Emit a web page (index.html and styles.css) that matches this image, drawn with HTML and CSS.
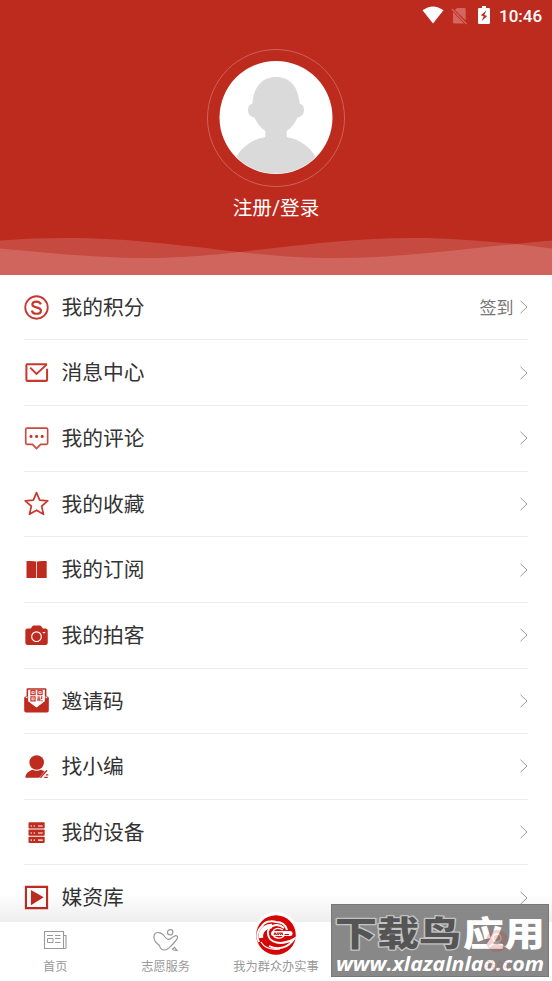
FILE: index.html
```html
<!DOCTYPE html>
<html lang="zh-CN">
<head>
<meta charset="utf-8">
<title>我的</title>
<link rel="stylesheet" href="styles.css">
</head>
<body>
<div class="app">
  <header class="hero">
    <div class="status">
      <svg class="wifi" width="22" height="18" viewBox="0 0 22 18"><path d="M.5 4.3Q11-3.5 21.5 4.3L11 17.5Z" fill="#fff"/></svg>
      <svg class="sim" width="17" height="18" viewBox="0 0 17 18"><path d="M6 1h7.500q1.200 0 1.200 1.200V13.500L4 3Z M2 5 13 16.500H3.200Q2 16.500 2 15.300Z" fill="#d4665e"/><path d="m1 2 14.500 15" stroke="#d4665e" stroke-width="1.400"/></svg>
      <svg class="battery" width="12" height="18" viewBox="0 0 12 18"><path d="M4 0h4v2h2.800q1.200 0 1.200 1.200v13.600q0 1.200-1.200 1.200H1.200Q0 18 0 16.800V3.200Q0 2 1.200 2H4Z" fill="#fff"/><path d="M8.500 4.500 2.800 9.200l2.900 1-2 4.800 5.600-5-3-1Z" fill="#bd2a1e"/></svg>
      <span class="time">10:46</span>
    </div>
    <div class="avatar">
      <svg width="114" height="114" viewBox="0 0 114 114">
        <defs><clipPath id="face"><circle cx="57" cy="56.500" r="56"/></clipPath></defs>
        <circle cx="57" cy="56.500" r="56.500" fill="#fff"/>
        <path clip-path="url(#face)" d="M57 16c-14 0-22.500 10-23.600 26.500-3.500 1-4.700 4-4.400 7 .4 4.500 3 6.500 6.500 7 2.700 6 6.300 10.500 10.800 13.500v6C33 78.500 22 86 16 98.500v15.500h82V98.500C92 86 81 78.500 67.700 76v-6c4.500-3 8.100-7.500 10.800-13.500 3.500-.5 6.100-2.500 6.500-7 .3-3-.9-6-4.400-7C79.500 26 71 16 57 16Z" fill="#dadada"/>
      </svg>
    </div>
    <a class="login">注册/登录</a>
    <svg class="waves" width="552" height="38" viewBox="0 0 552 38">
      <g fill="#fff" fill-opacity=".152">
        <path d="M0 3.500C22 1.800 44 1 67 1c61 0 110 7 173 14 40 4.500 60 6 95 6 65 0 120-8 181-14 12-1.500 24-2.500 36-3.500V38H0Z"/>
        <path d="M0 11.500C50 16 95 21 145 21c35 0 62-2.500 95-6 60-7 112-14 175-14 35 0 68 3 101 6 12 1.500 24 3 36 4.500V38H0Z"/>
      </g>
    </svg>
  </header>

  <main class="menu">
    <a class="row">
      <svg class="icon" viewBox="0 0 26 26"><circle cx="13" cy="13" r="11.700" fill="none" stroke="#c9382d" stroke-width="1.900"/><path d="M17.500 9.700C16.800 7.600 15.200 6.800 13 6.800c-2.500 0-4.300 1.100-4.300 3 0 4.200 8.900 2 8.900 6.500 0 1.900-1.900 3.200-4.500 3.200-2.700 0-4.500-1.200-4.900-3.400" fill="none" stroke="#c9382d" stroke-width="2.300"/></svg>
      <span class="label">我的积分</span><span class="note">签到</span>
      <svg class="arrow" viewBox="0 0 8 14"><path d="m.5.800 6.500 6.200-6.500 6.200"/></svg>
    </a>
    <a class="row">
      <svg class="icon" viewBox="0 0 26 26" fill="none" stroke="#c9382d" stroke-width="2.100"><path d="M24 4.300H3.500q-1 0-1 1v15.400q0 1 1 1h19.500q1 0 1-1V9"/><path d="m6.500 8 6.500 6.500L23.500 4.800" stroke-width="2"/></svg>
      <span class="label">消息中心</span>
      <svg class="arrow" viewBox="0 0 8 14"><path d="m.5.800 6.500 6.200-6.500 6.200"/></svg>
    </a>
    <a class="row">
      <svg class="icon" viewBox="0 0 26 26"><path d="M3.200 2.200h20q1.400 0 1.400 1.400v14.100q0 1.400-1.400 1.400h-5.900L13 23.500l-4.200-4.400H3.200q-1.400 0-1.400-1.400V3.600q0-1.400 1.400-1.400Z" fill="none" stroke="#cb493f" stroke-width="1.700"/><g fill="#c9382d"><circle cx="7.300" cy="10.800" r="1.600"/><circle cx="13.100" cy="10.800" r="1.600"/><circle cx="18.900" cy="10.800" r="1.600"/></g></svg>
      <span class="label">我的评论</span>
      <svg class="arrow" viewBox="0 0 8 14"><path d="m.5.800 6.500 6.200-6.500 6.200"/></svg>
    </a>
    <a class="row">
      <svg class="icon" viewBox="0 0 26 26"><path d="m13 1.700 3.300 7.700 8.400.8-6.300 5.600 1.900 8.500-7.300-4.400-7.300 4.400 1.900-8.500-6.300-5.600 8.400-.8Z" fill="none" stroke="#c9382d" stroke-width="1.800" stroke-linejoin="round"/></svg>
      <span class="label">我的收藏</span>
      <svg class="arrow" viewBox="0 0 8 14"><path d="m.5.800 6.500 6.200-6.500 6.200"/></svg>
    </a>
    <a class="row">
      <svg class="icon" viewBox="0 0 26 26" fill="#be2b1f"><path d="M2.600 4.200q8-.4 10.100.5v17.100H2.600ZM13.500 4.700q2.200-.9 10.100-.5v17.600H13.500Z"/></svg>
      <span class="label">我的订阅</span>
      <svg class="arrow" viewBox="0 0 8 14"><path d="m.5.800 6.500 6.200-6.500 6.200"/></svg>
    </a>
    <a class="row">
      <svg class="icon" viewBox="0 0 26 26"><path d="M3.700 5.600H7l1.700-2.300q.5-.7 1.300-.7h6.600q.8 0 1.300.7l1.700 2.300h2.800q2.300 0 2.300 2.300v12.600q0 2.300-2.300 2.300H3.700q-2.300 0-2.300-2.300V7.900q0-2.300 2.300-2.300Z" fill="#be2b1f"/><circle cx="13" cy="14.200" r="5" fill="none" stroke="#fff" stroke-width="1.200"/><path d="M19.500 10h2.500" stroke="#fff" stroke-width="1.200"/></svg>
      <span class="label">我的拍客</span>
      <svg class="arrow" viewBox="0 0 8 14"><path d="m.5.800 6.500 6.200-6.500 6.200"/></svg>
    </a>
    <a class="row">
      <svg class="icon" viewBox="0 0 26 26"><path d="M3.700.3h18.600q1 0 1 1V8l2.500 2v13.500q0 2-2 2H2.200q-2 0-2-2V10l2.500-2V1.300q0-1 1-1Z" fill="#be2b1f"/><path d="M4.300 1.800h17.400v12L13 20.300l-8.700-6.500ZM1.500 9.800l2-1.600v2.600ZM24.500 9.800l-2-1.600v2.600Z" fill="#fff"/><g fill="none" stroke="#c9382d" stroke-width="1.300"><path d="M7.200 2.600h4.300v4.300H7.200zM14.500 2.600h4.300v4.300h-4.300zM7.200 9.200h4.300v4.300H7.200z"/><path d="M8.800 4.700h1.400M16 4.700h1.400M8.800 11.200h1.400M14 9.500h2.500M18.400 8.500v3M14.500 13.500v-2.300h2v2.600M18 13.300h1.300"/></g></svg>
      <span class="label">邀请码</span>
      <svg class="arrow" viewBox="0 0 8 14"><path d="m.5.800 6.500 6.200-6.500 6.200"/></svg>
    </a>
    <a class="row">
      <svg class="icon" viewBox="0 0 26 26"><circle cx="13.200" cy="8.800" r="7.600" fill="#be2b1f"/><path d="M1.400 24.600c.3-4.400 3.600-6.900 7.300-8.200 3.200 1.300 6 1.300 8.800 0l4 1.600-5.600 6.600Z" fill="#be2b1f"/><path d="m17 24.700 7-7.800M21 24.400h3.700M22.800 21.700h2.500" stroke="#be2b1f" stroke-width="1.300"/></svg>
      <span class="label">找小编</span>
      <svg class="arrow" viewBox="0 0 8 14"><path d="m.5.800 6.500 6.200-6.500 6.200"/></svg>
    </a>
    <a class="row">
      <svg class="icon" viewBox="0 0 26 26"><g fill="#be2b1f"><rect x="4.700" y="2.300" width="16.800" height="6.500" rx=".8"/><rect x="4.700" y="9.800" width="16.800" height="6.500" rx=".8"/><rect x="4.700" y="17.300" width="16.800" height="6.500" rx=".8"/></g><path d="M6.800 6.200h1.500M10 6.200h1.500M14.500 6.200h5M6.800 13.500h1.500M10 13.500h1.500M14.500 13.500h5M6.800 20.900h1.500M10 20.900h1.500M14.500 20.900h5" stroke="#fff" stroke-width="1.100"/></svg>
      <span class="label">我的设备</span>
      <svg class="arrow" viewBox="0 0 8 14"><path d="m.5.800 6.500 6.200-6.500 6.200"/></svg>
    </a>
    <a class="row">
      <svg class="icon" viewBox="0 0 26 26"><path d="M2 2h22v22H2Z" fill="none" stroke="#be2b1f" stroke-width="2.200"/><path d="M7.200 5.300 20.500 12.800 7.200 21Z" fill="#be2b1f"/></svg>
      <span class="label">媒资库</span>
      <svg class="arrow" viewBox="0 0 8 14"><path d="m.5.800 6.500 6.200-6.500 6.200"/></svg>
    </a>
  </main>

  <nav class="tabs">
    <a class="tab">
      <svg class="tab-icon" width="26" height="24" viewBox="0 0 26 24" fill="none" stroke="#999"><path d="M2 2.500h19.500v17H2.500v-17M21.500 6.500H24v12q0 1-1 1h-2" stroke-width="1.100"/><path d="M5.500 9.500H11v4H5.500ZM5 6.500h6M13 6.500h5.500M13 9.500h5.500M13 13.500h5.500"/></svg>
      <span>首页</span>
    </a>
    <a class="tab">
      <svg class="tab-icon" width="26" height="24" viewBox="0 0 26 24" fill="none" stroke="#999" stroke-width="1.200"><circle cx="17.200" cy="3.300" r="2.700"/><path d="M12 8C9 3 2 1.500 1 7c-.8 4 2 7 5.500 9.500.5 2.500 2.500 4.500 5 4.500 3.500 0 5.500-3 8-5.500 3-3 6.500-7 4.500-8.500-1.500-1.500-3.500.5-5.500 2C16 11 14 11 12 8ZM19 20.500l2.500-2.200L24 21.500l-4-.5"/></svg>
      <span>志愿服务</span>
    </a>
    <a class="tab tab-main">
      <svg class="tab-logo" width="46" height="46" viewBox="0 0 46 46"><circle cx="23" cy="23" r="23" fill="#fff"/><circle cx="23" cy="23" r="19.800" fill="#d50606"/><g fill="none" stroke="#fff"><path d="M6 30C3 24 5 18 9 14c2-4 9-6 14-4 7 0 10 4 11 8" stroke-width="2"/><path d="M31 16c-7-6-17-2-16 6 1 9 13 12 26 5-5 8-16 12-25 7" stroke-width="2"/><path d="M8 30c4 7 11 8 19 7" stroke-width="1.200"/><path d="M8 26c-1-7 4-12 11-12" stroke-width="4.500"/><path d="M30 18c-6-4-11 0-10 4 1 5 8 5 11 2" stroke-width="1.300"/></g><rect x="18" y="19" width="21.500" height="5" rx="2.500" fill="#fff"/><path d="m21 23 1-2.500 1 2.500 2-2.500V23l2-2.500.5 2.500 1.500-2.500.5 2.500M31.500 22.500H36" fill="none" stroke="#d50606"/></svg>
      <span>我为群众办实事</span>
    </a>
    <a class="tab"></a>
    <a class="tab"></a>
  </nav>

  <aside class="watermark">
    <svg width="218" height="73" viewBox="0 0 218 73">
      <g class="wm-title"><text class="wm-dark" x="4" y="42" textLength="126" lengthAdjust="spacingAndGlyphs">下载鸟</text><text class="wm-light" x="132" y="42" textLength="82" lengthAdjust="spacingAndGlyphs">应用</text></g>
      <text class="wm-url" x="5" y="67" textLength="208" lengthAdjust="spacingAndGlyphs">www.xlazalnlao.com</text>
      <g class="wm-ghost"><circle cx="166" cy="37" r="11"/><circle class="ghost-line" cx="166" cy="34" r="4"/><path class="ghost-line" d="M158 43q8-8 16 0"/><text x="154" y="67">我的</text></g>
    </svg>
  </aside>
</div>
</body>
</html>
```
FILE: styles.css
```css
* { box-sizing: border-box; }

body {
  margin: 0;
  background: #fff;
  font-family: Roboto, "Noto Sans CJK SC", sans-serif;
}

svg { display: block; }

.app {
  position: relative;
  width: 552px;
  height: 981px;
  overflow: hidden;
  display: flex;
  flex-direction: column;
}

.hero {
  flex: none;
  height: 274.800px;
  background: #bd2a1e;
  color: #fff;
  display: flex;
  flex-direction: column;
  align-items: center;
}

.status {
  align-self: stretch;
  height: 32px;
  padding-right: 10px;
  display: flex;
  justify-content: flex-end;
  align-items: center;
}

.wifi { margin: -2px -1px 0 0; }
.sim { margin-left: 8px; }
.battery { margin: -2px 0 0 10px; }
.time {
  width: 43px;
  margin-left: 9px;
  font-size: 17px;
  font-weight: 500;
  line-height: 32px;
  white-space: nowrap;
}

.avatar {
  flex: none;
  width: 138px;
  height: 138px;
  margin-top: 16.500px;
  border: 1px solid #d0625a;
  border-radius: 50%;
  display: flex;
  align-items: center;
  justify-content: center;
}

.login {
  margin-top: 7.500px;
  font-size: 19.600px;
  line-height: 30px;
}

.waves {
  flex: none;
  margin-top: auto;
}

.menu {
  flex: none;
  padding: 0 24px;
}

.row {
  height: 65.630px;
  border-bottom: 1px solid #ededed;
  display: flex;
  align-items: center;
}

.icon {
  flex: none;
  width: 25px;
  height: 25px;
}

.label {
  margin: 1.500px 0 0 12.500px;
  color: #333;
  font-size: 20.750px;
  line-height: 30px;
}

.note {
  margin: 2px 6.500px 0 auto;
  color: #777;
  font-size: 17px;
  line-height: 26px;
}

.arrow {
  width: 8px;
  height: 14px;
  margin-left: auto;
  fill: none;
  stroke: #999;
  stroke-width: 1;
}

.note + .arrow { margin-left: 0; }

.tabs {
  position: absolute;
  left: 0;
  right: 0;
  bottom: 0;
  height: 59px;
  background: #fff;
  display: grid;
  grid-template-columns: repeat(5, 1fr);
  grid-template-rows: 59px;
}

.tabs::before {
  content: "";
  position: absolute;
  left: 0;
  right: 0;
  bottom: 100%;
  height: 28px;
  background: linear-gradient(rgba(0, 0, 0, 0), rgba(0, 0, 0, .07));
}

.tab {
  position: relative;
  height: 59px;
  display: flex;
  flex-direction: column;
  align-items: center;
  justify-content: flex-end;
  padding-bottom: 4px;
  color: #999;
  font-size: 12.200px;
  line-height: 20px;
  white-space: nowrap;
}

.tab-icon { flex: none; margin-bottom: 4px; }
.tab-logo { flex: none; margin-bottom: -1px; }

.watermark {
  position: absolute;
  left: 331px;
  top: 904px;
  width: 218px;
  height: 73px;
  background: #888;
  border: 1px solid #777;
}

.watermark svg { margin: -1px; }

.wm-title {
  font-family: "Noto Sans CJK SC", sans-serif;
  font-size: 34px;
  font-weight: 900;
  paint-order: stroke;
  stroke-linejoin: round;
}

.wm-dark { fill: #555; stroke: #c4c4c4; stroke-width: 2.500px; }
.wm-light { fill: #fff; }

.wm-url {
  fill: #fff;
  font-family: "Open Sans", sans-serif;
  font-size: 20px;
  font-weight: 700;
  font-style: italic;
}

.wm-ghost { fill: #c9382d; opacity: .22; font-size: 12px; }
.ghost-line { fill: none; stroke: #fff; stroke-width: 1.500px; }
```
